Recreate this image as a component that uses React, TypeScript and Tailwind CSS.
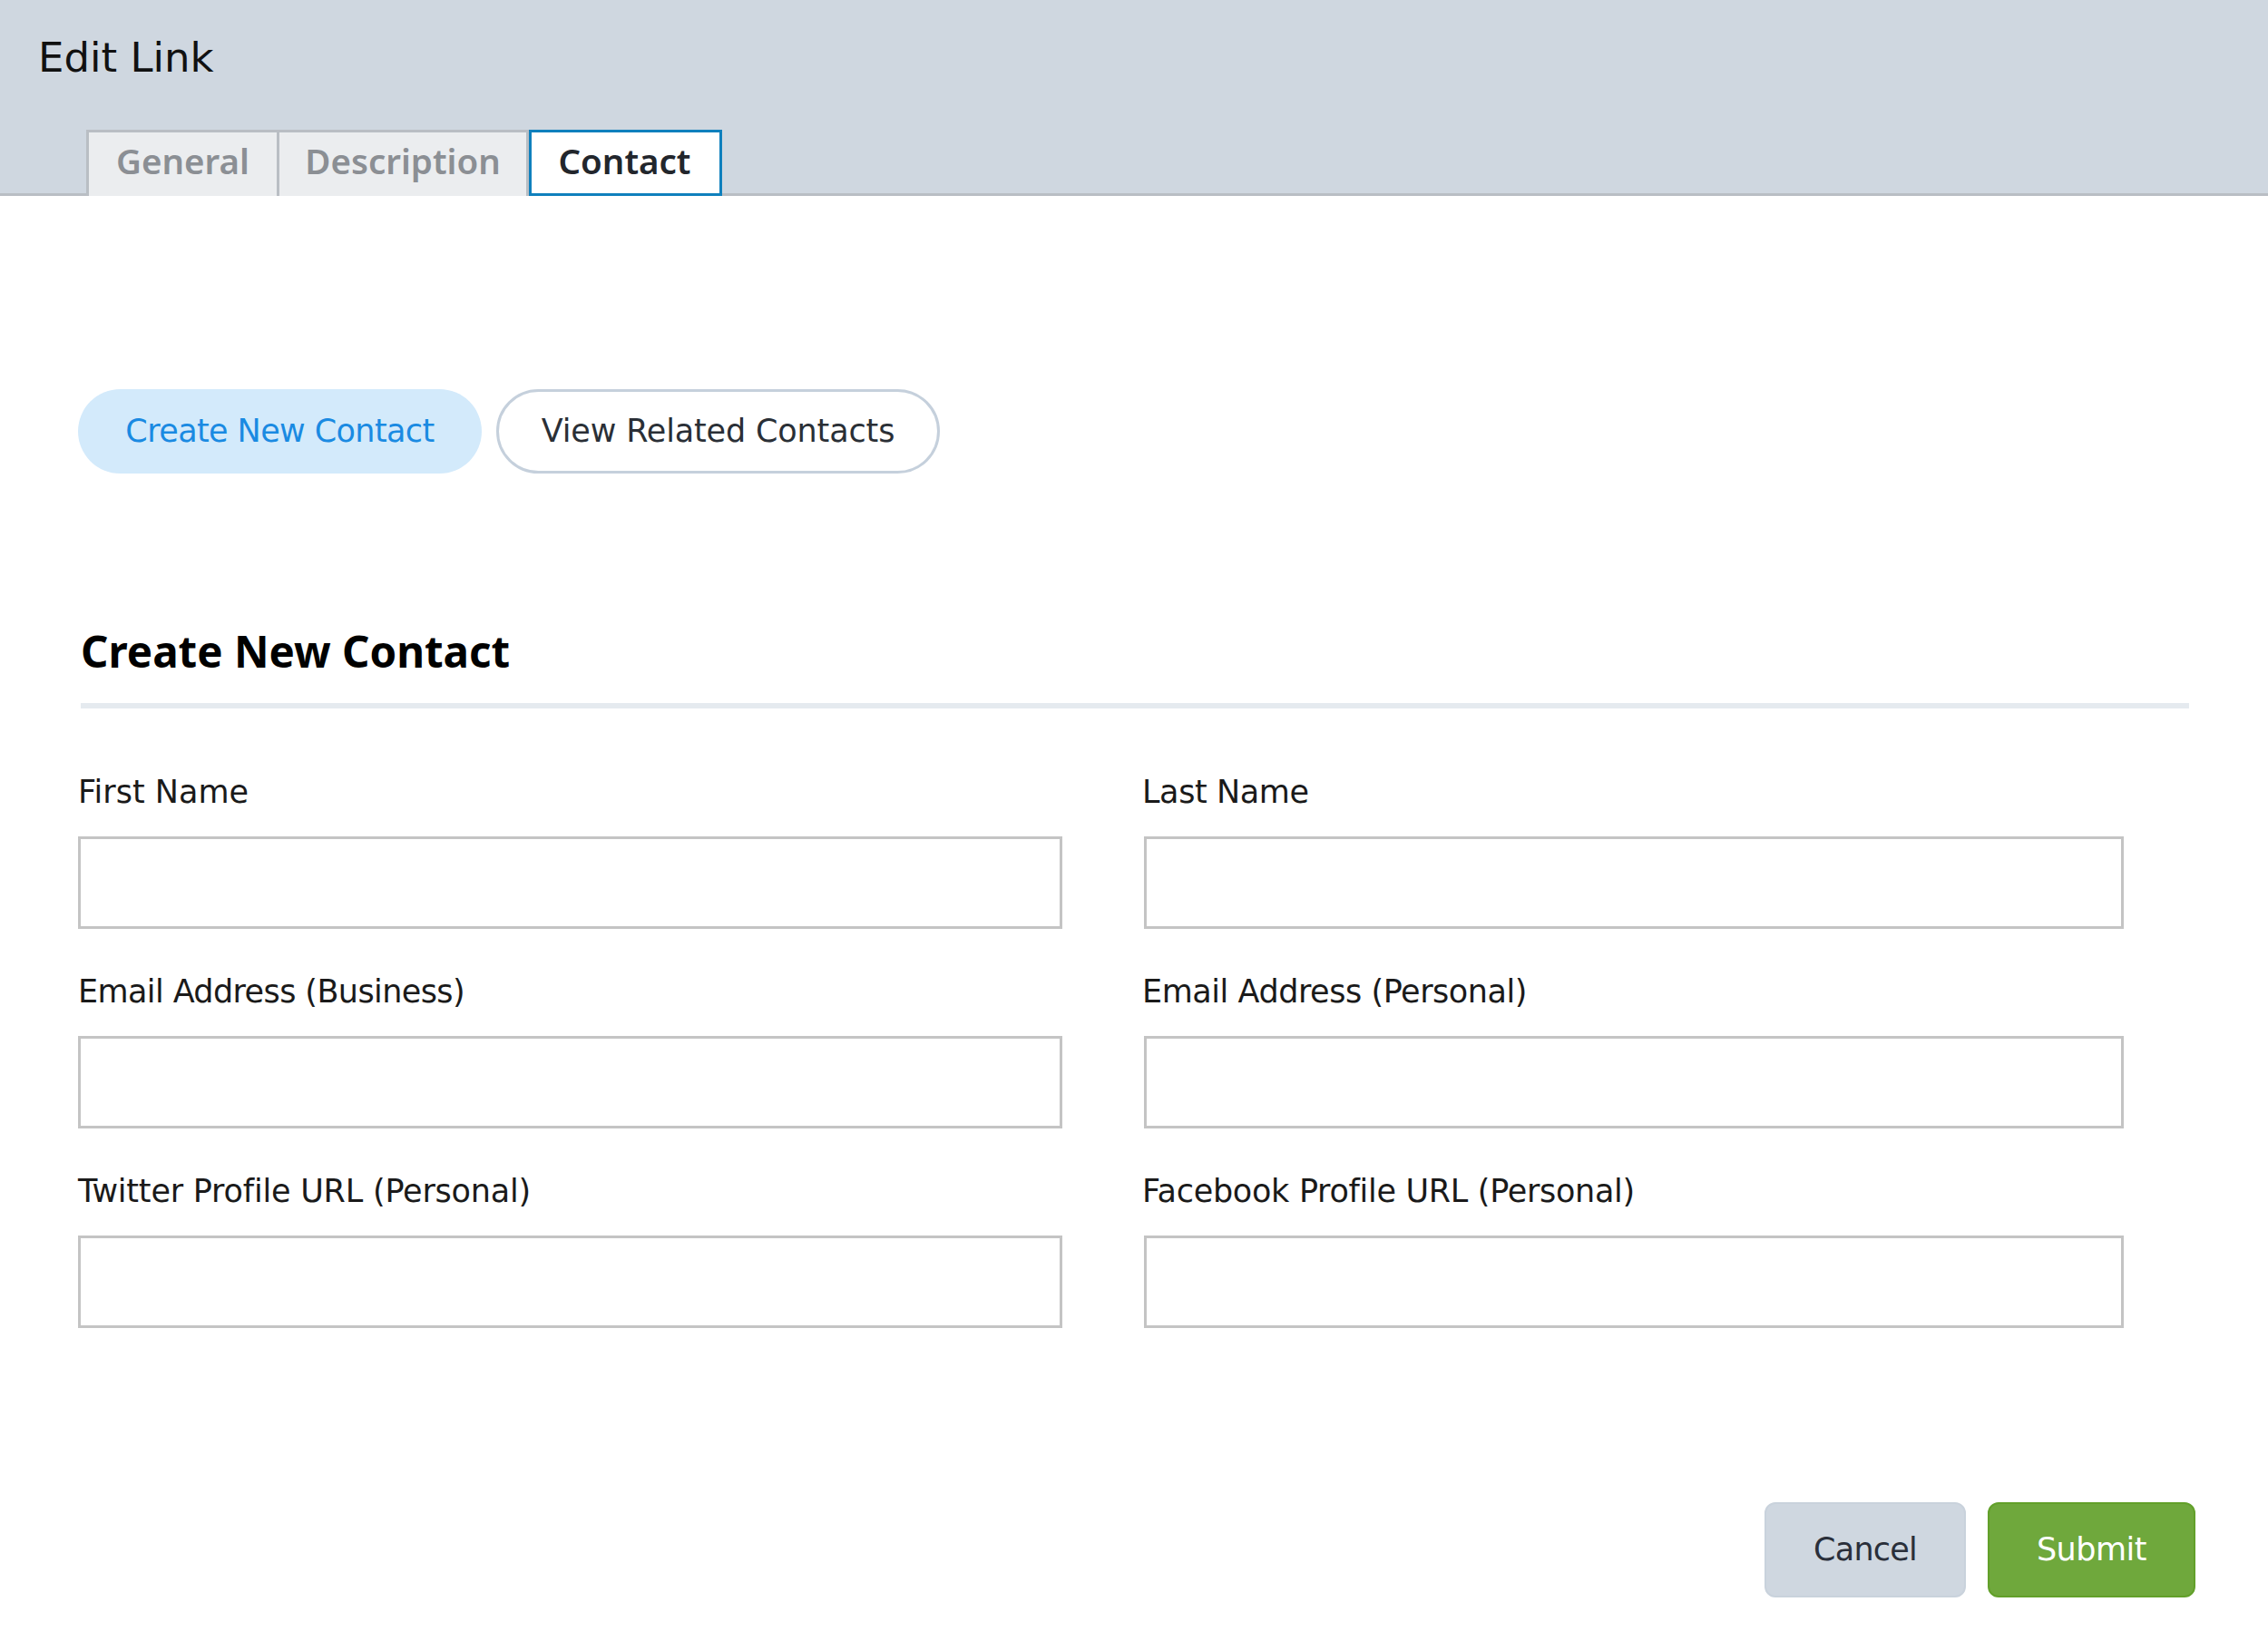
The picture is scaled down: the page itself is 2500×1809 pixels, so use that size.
const FONT = "font-['DejaVu_Sans',Verdana,sans-serif]";
const TAB = "font-['Noto_Sans',sans-serif] text-[38.5px] font-semibold";

const fields = [
  { label: 'First Name', tracking: 'tracking-normal' },
  { label: 'Last Name', tracking: 'tracking-[-0.4px] -ml-[2px]' },
  { label: 'Email Address (Business)', tracking: 'tracking-[-0.6px]' },
  { label: 'Email Address (Personal)', tracking: 'tracking-[-0.45px] -ml-[2px]' },
  { label: 'Twitter Profile URL (Personal)', tracking: 'tracking-[-0.2px]' },
  { label: 'Facebook Profile URL (Personal)', tracking: 'tracking-[-0.3px] -ml-[2px]' },
];

const App = () => {
  return (
    <div className={`${FONT} h-[1809px] w-[2500px] overflow-hidden bg-white`}>
      <header className="h-[216px] border-b-[3px] border-[#b9bec4] bg-[#cfd7e0]">
        <h1 className="pl-[42px] pt-[36px] text-[45px] leading-[56px] text-[#111]">Edit Link</h1>
        <nav className="ml-[95px] mt-[51px] flex h-[73px]">
          <span className={`${TAB} flex w-[213px] items-center justify-center border-[3px] border-b-0 border-[#b9bec4] bg-[#ebedef] pb-[6px] text-[#8b8f94]`}>
            General
          </span>
          <span className={`${TAB} flex w-[275px] items-center justify-center border-y-[3px] border-r-[3px] border-b-0 border-[#b9bec4] bg-[#ebedef] pb-[6px] text-[#8b8f94]`}>
            Description
          </span>
          <span className={`${TAB} flex w-[213px] items-center justify-center border-[3px] border-[#0f80bd] bg-white pb-[3px] pr-[2px] text-[#22262c]`}>
            Contact
          </span>
        </nav>
      </header>

      <main className="pl-[86px] pt-[213px]">
        <div className="flex gap-4">
          <button className="h-[93px] w-[445px] rounded-full bg-[#d3eafb] text-[35px] tracking-[-0.6px] text-[#1a8ae2]">
            Create New Contact
          </button>
          <button className="h-[93px] w-[489px] rounded-full border-[3px] border-[#c5d0dc] bg-white text-[35px] tracking-[-0.15px] text-[#2a2f36]">
            View Related Contacts
          </button>
        </div>

        <h2 className="ml-[3px] mt-[168px] font-['Noto_Sans',sans-serif] text-[47.5px] font-bold leading-[56px] text-black">
          Create New Contact
        </h2>
        <div className="ml-[3px] mt-[29px] h-[6px] w-[2324px] bg-[#e5eaef]" />

        <form className="mt-[72px] grid w-[2255px] grid-cols-[1085px_1080px] gap-x-[90px] gap-y-[49px]">
          {fields.map((field) => (
            <label key={field.label} className="block">
              <span className={`mb-[29px] block text-[35px] leading-[40px] text-[#1a1a1a] ${field.tracking}`}>{field.label}</span>
              <input className="block h-[102px] w-full border-[3px] border-[#c4c4c4] bg-white outline-none" />
            </label>
          ))}
        </form>

        <div className="mr-[80px] mt-[192px] flex justify-end gap-[24px]">
          <button className="h-[105px] w-[222px] rounded-[12px] border-2 border-[#c9d2dc] bg-[#cfd7e0] text-[35px] tracking-[-0.8px] text-[#2a2f3a]">
            Cancel
          </button>
          <button className="h-[105px] w-[229px] rounded-[12px] border-2 border-[#62a02a] bg-[#6fa83c] text-[35px] tracking-[-0.5px] text-white">
            Submit
          </button>
        </div>
      </main>
    </div>
  );
};

export default App;
